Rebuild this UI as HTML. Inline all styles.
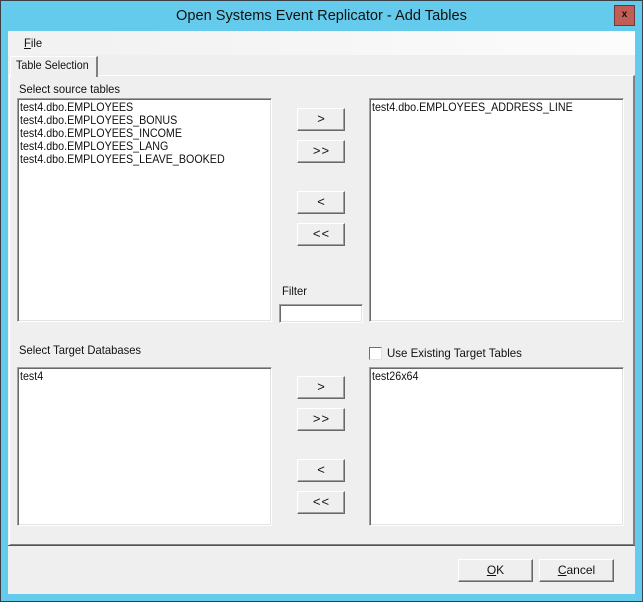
<!DOCTYPE html>
<html><head><meta charset="utf-8"><style>
html,body{margin:0;padding:0;width:643px;height:602px;overflow:hidden;background:#65cbec}
*{box-sizing:border-box}
div,span{position:absolute;white-space:nowrap}
body{font-family:"Liberation Sans",sans-serif;font-size:12px;color:#000}
u{text-decoration:underline}
.t{line-height:13px;height:13px;font-size:12px;color:#111;transform-origin:0 50%}
.n{transform:scaleX(.893)}
.m{transform:scaleX(.935)}
.lb{background:#fff;border:1px solid #fff;border-top-color:#a0a0a0;border-left-color:#a0a0a0;box-shadow:inset 1px 1px 0 #696969,inset -1px -1px 0 #e3e3e3}
.lb .t{left:2px}
.b{background:#efefef;border-top:1px solid #fff;border-left:1px solid #fff;border-right:1px solid #696969;border-bottom:1px solid #696969;box-shadow:inset -1px -1px 0 #a0a0a0;text-align:center;font-size:12px;color:#111}
.b span{left:0;right:0;top:2px;line-height:16px;text-align:center}
.a span{letter-spacing:1px;font-size:13px;top:2px;left:1px;font-weight:400}
</style></head><body>
<div style="left:0;top:0;width:643px;height:602px;border:1px solid #3b4046"></div>
<div style="left:0;width:643px;text-align:center;top:8px;font-size:14.6px;line-height:17px;color:#111">Open Systems Event Replicator - Add Tables</div>
<div style="left:614px;top:5px;width:21px;height:21px;background:#c25d55;border:1px solid #6a3a38;text-align:center;font:bold 10px/19px 'Liberation Mono',monospace;color:#111">x</div>

<div style="left:8px;top:31px;width:627px;height:563px;background:#efefef"></div>
<div style="left:8px;top:31px;width:627px;height:24px;background:linear-gradient(90deg,#f1f1f1 0%,#f6f6f6 50%,#fcfcfc 100%)"></div>
<div class="t m" style="left:24px;top:37px"><u>F</u>ile</div>

<!-- tab panel -->
<div style="left:9px;top:75px;width:626px;height:471px;border-top:1px solid #fff;border-left:1px solid #fff;border-right:2px solid #808080;border-bottom:2px solid #808080;background:#efefef"></div>
<div style="left:8px;top:545px;width:627px;height:1px;background:#555"></div>
<!-- tab -->
<div style="left:10px;top:56px;width:88px;height:21px;background:#efefef;border-top:1px solid #fff;border-left:1px solid #fff;border-right:2px solid #808080"></div>
<div class="t n" style="left:16px;top:59px">Table Selection</div>

<div class="t m" style="left:19px;top:83px">Select source tables</div>
<div class="lb" style="left:17px;top:98px;width:255px;height:224px">
<div class="t n" style="top:2px">test4.dbo.EMPLOYEES</div>
<div class="t n" style="top:15px">test4.dbo.EMPLOYEES_BONUS</div>
<div class="t n" style="top:28px">test4.dbo.EMPLOYEES_INCOME</div>
<div class="t n" style="top:41px">test4.dbo.EMPLOYEES_LANG</div>
<div class="t n" style="top:54px">test4.dbo.EMPLOYEES_LEAVE_BOOKED</div>
</div>
<div class="lb" style="left:369px;top:98px;width:255px;height:224px">
<div class="t n" style="top:2px">test4.dbo.EMPLOYEES_ADDRESS_LINE</div>
</div>

<div class="b a" style="left:297px;top:108px;width:48px;height:23px"><span>&gt;</span></div>
<div class="b a" style="left:297px;top:140px;width:48px;height:23px"><span>&gt;&gt;</span></div>
<div class="b a" style="left:297px;top:191px;width:48px;height:23px"><span>&lt;</span></div>
<div class="b a" style="left:297px;top:223px;width:48px;height:23px"><span>&lt;&lt;</span></div>

<div class="t m" style="left:282px;top:285px">Filter</div>
<div class="lb" style="left:279px;top:304px;width:84px;height:19px"></div>

<div class="t m" style="left:19px;top:344px">Select Target Databases</div>
<div class="lb" style="left:369px;top:347px;width:13px;height:13px;box-shadow:none;border-color:#707070 #e3e3e3 #e3e3e3 #707070"></div>
<div class="t" style="left:387px;top:347px;transform:scaleX(.957)">Use Existing Target Tables</div>

<div class="lb" style="left:17px;top:367px;width:255px;height:159px">
<div class="t n" style="top:2px">test4</div>
</div>
<div class="lb" style="left:369px;top:367px;width:255px;height:159px">
<div class="t n" style="top:2px">test26x64</div>
</div>

<div class="b a" style="left:297px;top:376px;width:48px;height:23px"><span>&gt;</span></div>
<div class="b a" style="left:297px;top:408px;width:48px;height:23px"><span>&gt;&gt;</span></div>
<div class="b a" style="left:297px;top:459px;width:48px;height:23px"><span>&lt;</span></div>
<div class="b a" style="left:297px;top:491px;width:48px;height:23px"><span>&lt;&lt;</span></div>

<div class="b" style="left:458px;top:559px;width:75px;height:23px"><span><u>O</u>K</span></div>
<div class="b" style="left:539px;top:559px;width:75px;height:23px"><span><u>C</u>ancel</span></div>
</body></html>
